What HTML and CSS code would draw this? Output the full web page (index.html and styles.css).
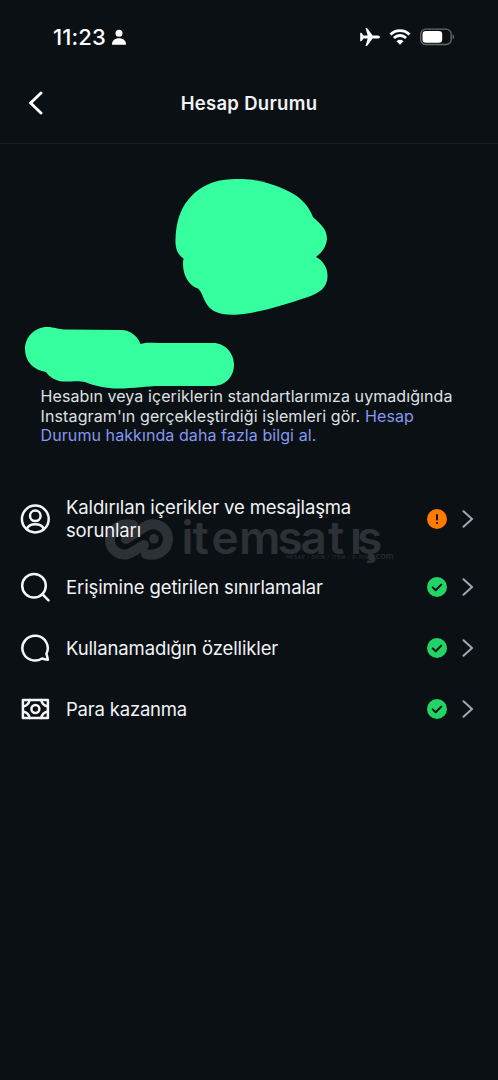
FILE: index.html
```
<!DOCTYPE html>
<html lang="tr">
<head>
<meta charset="utf-8">
<title>Hesap Durumu</title>
<link rel="stylesheet" href="styles.css">
</head>
<body>
<div class="screen">
  <div class="status">
    <span class="time">11:23</span>
    <svg class="person" width="16" height="16" viewBox="0 0 16 16"><circle cx="8" cy="4.2" r="3.5"/><path d="M1 15.2C1 11.5 4 9.2 8 9.2s7 2.3 7 6q-.1.5-.7.5H1.7q-.6 0-.7-.5Z"/></svg>
    <svg class="plane" width="22" height="20" viewBox="0 0 22 20"><path d="M21 10c0-1-1.300-1.600-3-1.600h-4.400L8.600 1.700Q8.200 1.100 7.500 1.100H6.500l2.200 7.300H4.500L2.800 6.200Q2.500 5.800 2 5.800H1.200V14.200H2q.5 0 .8-.4l1.700-2.200h4.200L6.500 18.900h1q.7 0 1.100-.6l5-6.700H18c1.700 0 3-.6 3-1.600Z"/></svg>
    <svg class="wifi" width="22" height="18" viewBox="0 0 22 18"><path class="arc" d="M1.500 6.500a13.600 13.600 0 0 1 19 0M4.900 10a8.800 8.800 0 0 1 12.200 0"/><path d="M11 16.700 7.500 13.300a5 5 0 0 1 7 0Z"/></svg>
    <svg class="battery" width="35" height="18" viewBox="0 0 35 18"><rect class="case" x=".7" y="1.200" width="30.500" height="15.300" rx="5"/><rect x="2.500" y="3" width="19.700" height="11.700" rx="3.300"/><path class="cap" d="M32.600 6.500c2 .7 2 4.100 0 4.800Z"/></svg>
  </div>
  <header class="bar">
    <svg class="back" width="16" height="24" viewBox="0 0 16 24"><path d="M13 2 2.600 12 13 22"/></svg>
    <h1>Hesap Durumu</h1>
  </header>
  <section class="intro">
    <svg class="cover" width="498" height="246" viewBox="0 144 498 246">
      <path class="edge" d="M240 180.500Q253 179 265 182"/>
      <path d="M239 179C256 179 275 184 290 192C302 198 309 207 313 217C319 223 327 228 327 239C326 248 321 253 316 257C322 260 328 267 327.500 277C327 288 319 293 308 297C287 304 263 312 239 314.500C221 316 211 312 206 303C203 298 202 292 198 288.500C188 286 181 272 183.500 258.500C178 255 175 249 175.500 239C176 227 178 215 185 204C197 186 215 178 239 179Z"/>
      <path d="M47 327C55 327 57 329.500 67 329.500L121 330C131 330 138 337 140.500 344C145 342.500 151 342.500 158 343H213C225 343 234 353 234 364.500C234 377 225 386 213 386H160C146 386 135 388.500 118 388.500C106 388.500 95 386 85 382C79 380.500 73 381.500 63 381.500C56 381 49 377 46 372C34 370 25 362 25 349C25 337 35 327 47 327Z"/>
    </svg>
    <p class="desc"><span class="l1">Hesabın veya içeriklerin standartlarımıza uymadığında</span><br><span class="l2">Instagram'ın gerçekleştirdiği işlemleri gör. <a>Hesap</a></span><br><a class="l3">Durumu hakkında daha fazla bilgi al.</a></p>
  </section>
  <main class="list">
    <svg class="mark" width="292" height="50" viewBox="104 515 292 50">
      <g class="ring"><path d="M133 525C123 522 110 528 110 540C110 550 119 556 128 554C132 553 135 550 144 545"/><path d="M146 554C157 557 168 550 168 539C168 529 159 523 150 524.500C145 525.500 142 529 126 539"/></g>
      <circle cx="154" cy="538.800" r="4.800"/>
      <text class="brand" y="553.500" x="181.500 192.500 211.500 239 277.500 300.500 328 350 357">itemsatış</text>
      <text class="tag" x="286" y="559.300" textLength="82">HESAP / SKIN / ITEM / E-PIN</text>
      <circle cx="371.500" cy="557" r="3.500"/>
      <text class="com" x="375.500" y="559.300" textLength="18" lengthAdjust="spacingAndGlyphs">com</text>
    </svg>
    <div class="row two">
      <svg class="icon" width="30" height="30" viewBox="0 0 30 30"><circle cx="15.300" cy="15" r="13.400"/><circle cx="15.300" cy="11.800" r="5.300"/><path d="M6.800 25.200C8 21.500 10.800 20.300 15.300 20.300s7.300 1.200 8.500 4.900"/></svg>
      <span class="label a">Kaldırılan içerikler ve mesajlaşma<br>sorunları</span>
      <svg class="badge warn" width="20" height="20" viewBox="0 0 20 20"><circle cx="10" cy="10" r="10"/><path d="M10 5.900v4.500M10 13.900v.1"/></svg>
      <svg class="chev" width="12" height="18" viewBox="0 0 12 18"><path d="M1.500 1.200 10 9l-8.500 7.800"/></svg>
    </div>
    <div class="row">
      <svg class="icon" width="30" height="30" viewBox="0 0 30 30"><circle cx="14" cy="13.800" r="11.800"/><path d="m22.200 22 6.300 6.300"/></svg>
      <span class="label b">Erişimine getirilen sınırlamalar</span>
      <svg class="badge" width="20" height="20" viewBox="0 0 20 20"><circle cx="10" cy="10" r="10"/><path d="m5.700 10.400 3 2.900 5.500-5.700"/></svg>
      <svg class="chev" width="12" height="18" viewBox="0 0 12 18"><path d="M1.500 1.200 10 9l-8.500 7.800"/></svg>
    </div>
    <div class="row">
      <svg class="icon" width="30" height="30" viewBox="0 0 30 30"><path d="M26.400 20.700A12.700 12.400 0 1 0 22 25.500Q24.700 26.400 27.900 26.800Q27.300 23.800 26.400 20.700Z"/></svg>
      <span class="label c">Kullanamadığın özellikler</span>
      <svg class="badge" width="20" height="20" viewBox="0 0 20 20"><circle cx="10" cy="10" r="10"/><path d="m5.700 10.400 3 2.900 5.500-5.700"/></svg>
      <svg class="chev" width="12" height="18" viewBox="0 0 12 18"><path d="M1.500 1.200 10 9l-8.500 7.800"/></svg>
    </div>
    <div class="row">
      <svg class="icon" width="30" height="30" viewBox="0 0 30 30"><path d="M2.900 5.900h25v18.200h-25Z"/><circle cx="15.400" cy="15" r="4"/><path d="M3.200 12.500Q8.500 11.500 9.700 6M27.700 12.500Q22.300 11.500 21.200 6M3.200 17.500Q8.500 18.500 9.700 24M27.700 17.500Q22.300 18.500 21.200 24"/></svg>
      <span class="label d">Para kazanma</span>
      <svg class="badge" width="20" height="20" viewBox="0 0 20 20"><circle cx="10" cy="10" r="10"/><path d="m5.700 10.400 3 2.900 5.500-5.700"/></svg>
      <svg class="chev" width="12" height="18" viewBox="0 0 12 18"><path d="M1.500 1.200 10 9l-8.500 7.800"/></svg>
    </div>
  </main>
</div>
</body>
</html>
```
FILE: styles.css
```
* { box-sizing: border-box; }
body { margin: 0; background: #0b1014; }
.screen { width: 498px; height: 1080px; overflow: hidden; background: #0b1014; color: #f1f3f5; font-family: Inter, "Noto Sans", sans-serif; }
svg { display: block; flex: none; }
.status { display: flex; align-items: center; height: 64px; padding: 10px 43px 0 53px; fill: #fff; color: #fff; }
.time { width: 53px; font-size: 22px; font-weight: 500; letter-spacing: 0.1px; white-space: nowrap; }
.person { margin-left: 5px; }
.plane { margin-left: auto; }
.wifi { margin-left: 8px; }
.battery { margin-left: 9px; }
.arc { fill: none; stroke: #fff; stroke-width: 2.9; }
.case { fill: none; stroke: #676b6e; stroke-width: 1.300; }
.cap { fill: #676b6e; }
.bar { display: grid; grid-template-columns: 28px 1fr 28px; align-items: center; height: 80px; padding: 0 25px 2px 27px; border-bottom: 1px solid #1a1f23; }
.back { margin-left: 1px; fill: none; stroke: #fff; stroke-width: 2.9; stroke-linecap: round; stroke-linejoin: round; }
h1 { margin: 0; padding-right: 2px; text-align: center; font-size: 18.500px; font-weight: 600; letter-spacing: 0.300px; }
.cover { fill: #36ff9f; }
.edge { fill: none; stroke: #333; stroke-width: 2; }
.desc { margin: -3px 0 0 40.600px; font-size: 16px; line-height: 19.500px; letter-spacing: 0.080px; white-space: nowrap; color: #dfe1e3; }
.desc a { color: #8598ee; }
.l2 { letter-spacing: 0.110px; }
.list { position: relative; padding-top: 31px; }
.mark { position: absolute; left: 104px; top: 69px; overflow: visible; fill: #2d3035; }
.ring { fill: none; stroke: #2d3035; stroke-width: 10; stroke-linecap: round; }
.brand { font-family: Inter, sans-serif; font-size: 46px; font-weight: 600; }
.tag { font-size: 5px; }
.com { font-size: 9px; }
.row { position: relative; display: flex; align-items: center; height: 61px; padding: 0 24px 0 20px; }
.two { height: 80px; padding-top: 5px; }
.icon { fill: none; stroke: #f5f6f7; stroke-width: 2.500; stroke-linejoin: round; stroke-linecap: round; }
.label { margin-left: 16px; font-size: 18.500px; line-height: 23px; letter-spacing: -0.120px; white-space: nowrap; }
.a { letter-spacing: -0.140px; }
.d { letter-spacing: -0.200px; }
.badge { margin-left: auto; fill: #20d466; stroke: none; }
.badge path { fill: none; stroke: #0b1014; stroke-width: 2; stroke-linecap: round; stroke-linejoin: round; }
.warn { fill: #ff7b00; }
.chev { margin-left: 15px; fill: none; stroke: #a2a8b0; stroke-width: 2; stroke-linecap: round; }
```
